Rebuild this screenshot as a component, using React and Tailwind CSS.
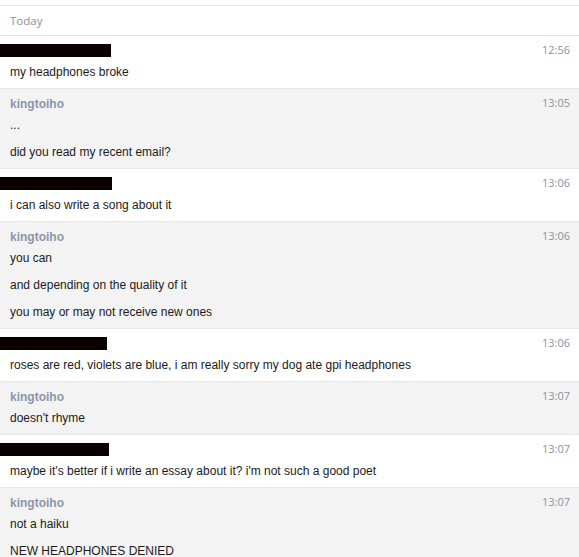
const messages = [
  { who: null, redact: 111, time: '12:56', lines: ['my headphones broke'] },
  { who: 'kingtoiho', time: '13:05', lines: ['...', 'did you read my recent email?'] },
  { who: null, redact: 112, time: '13:06', lines: ['i can also write a song about it'] },
  {
    who: 'kingtoiho',
    time: '13:06',
    lines: ['you can', 'and depending on the quality of it', 'you may or may not receive new ones'],
  },
  {
    who: null,
    redact: 107,
    time: '13:06',
    lines: ['roses are red, violets are blue, i am really sorry my dog ate gpi headphones'],
  },
  { who: 'kingtoiho', time: '13:07', lines: ["doesn't rhyme"] },
  {
    who: null,
    redact: 109,
    time: '13:07',
    lines: ["maybe it's better if i write an essay about it? i'm not such a good poet"],
  },
  { who: 'kingtoiho', time: '13:07', lines: ['not a haiku', 'NEW HEADPHONES DENIED'] },
];

const MessageGroup = ({ msg }) => {
  const mine = msg.who === null;
  return (
    <div
      className={`border-t border-[#e6e6e6] pt-[7px] pb-[2px] ${mine ? 'bg-white' : 'bg-[#f3f3f3]'}`}
    >
      {/* header line: sender (or redacted name) + time */}
      <div className="flex items-center justify-between h-[16px] pr-[9px]">
        {mine ? (
          <div className="h-[13px] -mt-[1px] bg-[#0a0000]" style={{ width: msg.redact }}></div>
        ) : (
          <span className="pl-[10px] text-[12px] font-bold text-[#8c96a8] font-['Liberation_Sans',Arial,sans-serif]">
            {msg.who}
          </span>
        )}
        <span className="self-start leading-[13px] text-[11px] text-[#8891a5] font-['Open_Sans',sans-serif]">
          {msg.time}
        </span>
      </div>
      {msg.lines.map((line, i) => (
        <div
          key={i}
          className="h-[27px] leading-[27px] pl-[10px] text-[12px] text-[#1b1b1b] font-['Liberation_Sans',Arial,sans-serif] whitespace-nowrap"
        >
          {line}
        </div>
      ))}
    </div>
  );
};

export default function App() {
  return (
    <div className="w-[579px] h-[557px] overflow-hidden bg-white">
      <div className="mt-[5px] h-[30px] border-t border-[#e6e6e6] flex items-center pl-[10px]">
        <span className="text-[11.5px] text-[#8a91a8] font-['Open_Sans',sans-serif]">Today</span>
      </div>
      {messages.map((msg, i) => (
        <MessageGroup key={i} msg={msg} />
      ))}
    </div>
  );
}
